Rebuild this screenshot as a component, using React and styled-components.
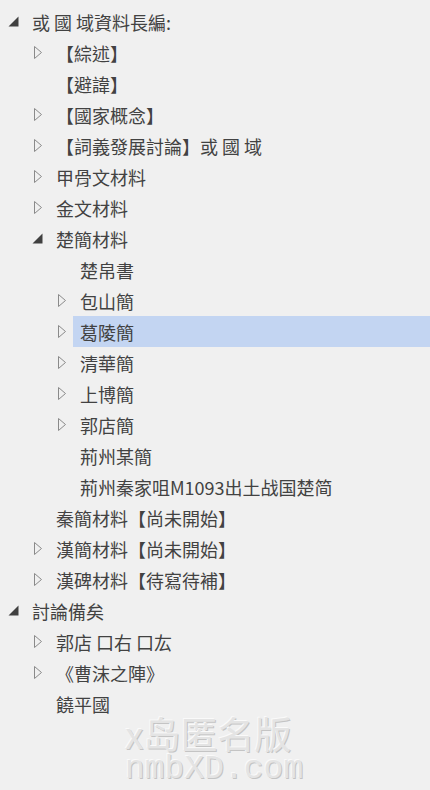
import React from 'react';
import styled, { createGlobalStyle } from 'styled-components';

const GlobalStyle = createGlobalStyle`
  html, body {
    margin: 0;
    padding: 0;
    background: #f0f0f0;
  }
  body {
    font-family: "Noto Sans CJK TC", "Noto Sans", sans-serif;
  }
`;

const Page = styled.div`
  position: relative;
  width: 430px;
  height: 790px;
  overflow: hidden;
  background: #f0f0f0;
  padding-top: 6px;
  box-sizing: border-box;
`;

const List = styled.ul`
  list-style: none;
  margin: 0;
  padding: 0;
`;

const Row = styled.li`
  display: flex;
  align-items: stretch;
  height: 31px;
  padding-left: ${(p) => p.level * 24}px;
`;

const Expander = styled.span`
  flex: 0 0 25px;
  display: flex;
  align-items: center;
  justify-content: flex-start;
  padding-left: ${(p) => (p.open ? 8 : 10)}px;
  box-sizing: border-box;
`;

const Label = styled.span`
  flex: 1;
  display: flex;
  align-items: center;
  padding: 0 7px;
  font-size: 18px;
  color: #424242;
  white-space: nowrap;
  background: ${(p) => (p.selected ? '#c3d5f2' : 'transparent')};
`;

const Watermark = styled.div`
  position: absolute;
  left: 125px;
  top: 713px;
  display: flex;
  flex-direction: column;
  color: #e4e4e4;
  text-shadow: -1px -1px 0 #fafafa, 1px 1px 0 #c4c4c4;
  pointer-events: none;
  user-select: none;
`;

const MarkTitle = styled.span`
  font-family: "Noto Sans CJK SC", sans-serif;
  font-size: 37px;
  line-height: 40px;
`;

const MarkSite = styled.span`
  font-family: "Liberation Mono", monospace;
  font-size: 33px;
  line-height: 34px;
`;

const OpenIcon = () => (
  <svg width="11" height="11" viewBox="0 0 11 11">
    <path d="M10.5 0.5 L10.5 10.5 L0.5 10.5 Z" fill="#404040" />
  </svg>
);

const ClosedIcon = () => (
  <svg width="9" height="13" viewBox="0 0 9 13">
    <path d="M0.5 0.5 L7.5 6.5 L0.5 12.5 Z" fill="none" stroke="#8a8a8a" strokeWidth="1" />
  </svg>
);

const items = [
  { level: 0, text: '或 國 域資料長編:', state: 'open' },
  { level: 1, text: '【綜述】', state: 'closed' },
  { level: 1, text: '【避諱】' },
  { level: 1, text: '【國家概念】', state: 'closed' },
  { level: 1, text: '【詞義發展討論】或 國 域', state: 'closed' },
  { level: 1, text: '甲骨文材料', state: 'closed' },
  { level: 1, text: '金文材料', state: 'closed' },
  { level: 1, text: '楚簡材料', state: 'open' },
  { level: 2, text: '楚帛書' },
  { level: 2, text: '包山簡', state: 'closed' },
  { level: 2, text: '葛陵簡', state: 'closed', selected: true },
  { level: 2, text: '清華簡', state: 'closed' },
  { level: 2, text: '上博簡', state: 'closed' },
  { level: 2, text: '郭店簡', state: 'closed' },
  { level: 2, text: '荊州某簡' },
  { level: 2, text: '荊州秦家咀M1093出土战国楚简' },
  { level: 1, text: '秦簡材料【尚未開始】' },
  { level: 1, text: '漢簡材料【尚未開始】', state: 'closed' },
  { level: 1, text: '漢碑材料【待寫待補】', state: 'closed' },
  { level: 0, text: '討論備矣', state: 'open' },
  { level: 1, text: '郭店 口右 口厷', state: 'closed' },
  { level: 1, text: '《曹沫之陣》', state: 'closed' },
  { level: 1, text: '饒平國' },
];

const App = () => (
  <Page>
    <GlobalStyle />
    <List>
      {items.map((item, i) => (
        <Row key={i} level={item.level}>
          <Expander open={item.state === 'open'}>
            {item.state === 'open' && <OpenIcon />}
            {item.state === 'closed' && <ClosedIcon />}
          </Expander>
          <Label selected={item.selected}>{item.text}</Label>
        </Row>
      ))}
    </List>
    <Watermark>
      <MarkTitle>x岛匿名版</MarkTitle>
      <MarkSite>nmbXD.com</MarkSite>
    </Watermark>
  </Page>
);

export default App;
